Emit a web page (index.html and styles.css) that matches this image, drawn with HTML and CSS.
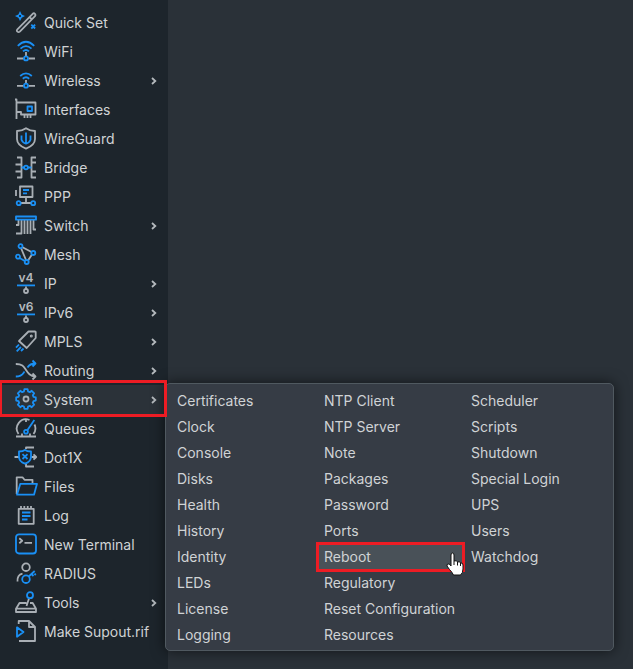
FILE: index.html
```html
<!DOCTYPE html>
<html lang="en">
<head>
<meta charset="utf-8">
<title>Router menu</title>
<link rel="stylesheet" href="styles.css">
</head>
<body>
<div class="app">
<nav class="sidebar" aria-label="Main">
<ul class="menu">
<li><a class="item" href="#"><svg class="icon" viewBox="0 0 24 25"><path d="M3.4 19.4 18.7 3.8q1.2-1 2.3 0t0 2.4L5.8 21.6q-1.2 1-2.4 0t0-2.2zM15.5 7l2.4 2.4"/><path class="b fill" d="M6 1 7.700 4.400 11 6 7.700 7.700 6 11 4.400 7.700 1 6 4.400 4.400z"/><path class="k" d="M6 5v2"/><path class="b" d="M17.300 14.700l3.800 3.800M21.100 14.700l-3.800 3.800"/></svg>Quick Set</a></li>
<li><a class="item" href="#"><svg class="icon" viewBox="0 0 24 25"><path class="b" d="M3.8 6.8Q12-1.2 20.2 6.8M6.5 9.7Q12 4.5 17.5 9.7M9 12.4Q12 9.5 15 12.4"/><path d="M12 13v4M3 19.5h6.5M14.5 19.5H21"/><circle class="b" cx="12" cy="19.4" r="2"/></svg>WiFi</a></li>
<li><button class="item" type="button"><svg class="icon" viewBox="0 0 24 25"><path class="b" d="M6.2 8Q12 2.7 17.8 8M8.8 10.7Q12 7.9 15.2 10.7"/><path d="M12 12v3.5M3 17.8h6.5M14.5 17.8H21"/><circle class="b" cx="12" cy="17.7" r="2"/></svg>Wireless<svg class="arrow" viewBox="0 0 6 10"><path d="M1 2l3.3 3L1 8"/></svg></button></li>
<li><a class="item" href="#"><svg class="icon" viewBox="0 0 24 25"><path d="M1 2.500h1.500v19.500M2.500 5.500h19v12H7V15H2.500M10.500 18v3M13.500 18v3M16.500 18v3"/><path class="b" d="M13.500 9.500h4.500v4.500h-4.500z"/></svg>Interfaces</a></li>
<li><a class="item" href="#"><svg class="icon" viewBox="0 0 24 25"><path d="M12 2.2Q16 5 21 5v8q0 6-9 9.7Q3 19 3 13V5q5 0 9-2.8z"/><path class="b" d="M12 6.5v11.3M7.5 9.5v4.2q1 3 4.5 4 3.500-1 4.500-4V9.500"/></svg>WireGuard</a></li>
<li><a class="item" href="#"><svg class="icon" viewBox="0 0 24 25"><path d="M3 2.500h4.500v20H3M1.500 9.500h6M1.500 16.500h6M22 2.500h-4.500v20H22M17.500 7.500H22M17.500 16.500H22"/><path class="b" d="M7.500 12.500H10M14 12.500h3.500"/><circle class="b" cx="12" cy="12.500" r="1.900"/></svg>Bridge</a></li>
<li><a class="item" href="#"><svg class="icon" viewBox="0 0 24 25"><path d="M6 2.500h12.500v10.500H6zM2 6v6M12 13v6M7 19h10"/><path class="b" d="M9 6h6M9 9.300h4"/><circle class="b" cx="4.700" cy="19.200" r="2"/><circle class="b" cx="19.200" cy="19.200" r="2"/></svg>PPP</a></li>
<li><button class="item" type="button"><svg class="icon" viewBox="0 0 24 25"><path d="M4.500 7v5H2M7.500 7v13.500H2M10.500 7v14M13.500 7v14M16.500 7v14M19.500 7v9.500H22"/><path class="b" d="M2 3.500h20v3.200H2z"/></svg>Switch<svg class="arrow" viewBox="0 0 6 10"><path d="M1 2l3.300 3L1 8"/></svg></button></li>
<li><a class="item" href="#"><svg class="icon" viewBox="0 0 24 25"><path d="M8 5l9.500 5M7 6l5 12M18 12.500l-4 6"/><path class="b" d="M5.600 16l5.200 3"/><g class="b"><circle cx="6.500" cy="4.200" r="2"/><circle cx="19.300" cy="11" r="2"/><circle cx="4" cy="14.700" r="2"/><circle cx="12.700" cy="20" r="2"/></g></svg>Mesh</a></li>
<li><button class="item" type="button"><svg class="icon" viewBox="0 0 24 25"><text x="12" y="11" text-anchor="middle">v4</text><path class="b" d="M3 14.400h18"/><path d="M12 15.500V18"/><circle cx="12" cy="20" r="2"/></svg>IP<svg class="arrow" viewBox="0 0 6 10"><path d="M1 2l3.300 3L1 8"/></svg></button></li>
<li><button class="item" type="button"><svg class="icon" viewBox="0 0 24 25"><text x="12" y="11" text-anchor="middle">v6</text><path class="b" d="M3 14.400h18"/><path d="M12 15.500V18"/><circle cx="12" cy="20" r="2"/></svg>IPv6<svg class="arrow" viewBox="0 0 6 10"><path d="M1 2l3.300 3L1 8"/></svg></button></li>
<li><button class="item" type="button"><svg class="icon" viewBox="0 0 24 25"><path d="M14.500 2.500 21 2.300 21.700 3v6L12.700 19 5 12z"/><circle cx="17.300" cy="7" r=".6"/><path class="b" d="M5 15.500 2 18.700M7 18l-4.300 4.300M9.500 19.500 7 22"/></svg>MPLS<svg class="arrow" viewBox="0 0 6 10"><path d="M1 2l3.300 3L1 8"/></svg></button></li>
<li><button class="item" type="button"><svg class="icon" viewBox="0 0 24 25"><path d="M1.800 6C9 6 10 9 12 12s4 6 9.500 6.500M18.500 15.500l3 3-3 3"/><path class="b" d="M1.800 18.500C8 18.500 9 15.500 10.500 13.500M13.500 9.500C15 7 17 5.500 21.500 5.500M18.500 2.500l3 3-3 3"/></svg>Routing<svg class="arrow" viewBox="0 0 6 10"><path d="M1 2l3.300 3L1 8"/></svg></button></li>
<li class="current"><button class="item" type="button" aria-expanded="true"><svg class="icon" viewBox="0 0 24 25"><path class="b" d="M10.400 2.200h3.200L14.100 4.500 15.800 5.200 17.700 3.800 20.200 6.300 18.800 8.200 19.500 9.900 21.800 10.400V13.600L19.500 14.100 18.800 15.800 20.200 17.700 17.700 20.200 15.800 18.800 14.100 19.500 13.600 21.800H10.400L9.900 19.500 8.200 18.800 6.300 20.200 3.800 17.700 5.200 15.800 4.500 14.100 2.200 13.600V10.400L4.500 9.900 5.200 8.200 3.800 6.300 6.300 3.800 8.200 5.200 9.900 4.500z"/><circle cx="12" cy="12" r="2.500"/></svg>System<svg class="arrow" viewBox="0 0 6 10"><path d="M1 2l3.300 3L1 8"/></svg></button>
<ul class="flyout">
<li><a href="#">Certificates</a></li><li><a href="#">Clock</a></li><li><a href="#">Console</a></li><li><a href="#">Disks</a></li><li><a href="#">Health</a></li><li><a href="#">History</a></li><li><a href="#">Identity</a></li><li><a href="#">LEDs</a></li><li><a href="#">License</a></li><li><a href="#">Logging</a></li>
<li><a href="#">NTP Client</a></li><li><a href="#">NTP Server</a></li><li><a href="#">Note</a></li><li><a href="#">Packages</a></li><li><a href="#">Password</a></li><li><a href="#">Ports</a></li>
<li class="hovered"><a href="#">Reboot</a><svg class="pointer" viewBox="0 0 18 24"><path d="M5 14V3q0-2 1.500-2T8 3v6q3-1 3.500 1Q14 9 14.500 11q2.500-.5 2.500 2v4q0 4-2.500 6H7.500Q6 20 3.500 17.500L1 14q-.5-2 1.500-2Q4 12 5 14z"/><path d="M8 9v4M11.500 10v3.500M14.500 11v3"/></svg></li>
<li><a href="#">Regulatory</a></li><li><a href="#">Reset Configuration</a></li><li><a href="#">Resources</a></li>
<li><a href="#">Scheduler</a></li><li><a href="#">Scripts</a></li><li><a href="#">Shutdown</a></li><li><a href="#">Special Login</a></li><li><a href="#">UPS</a></li><li><a href="#">Users</a></li><li><a href="#">Watchdog</a></li>
</ul></li>
<li><a class="item" href="#"><svg class="icon" viewBox="0 0 24 25"><path d="M2 20.500h20M4.500 18A9.300 9.300 0 0 1 15.500 4M20.500 8.500A9.300 9.300 0 0 1 19.500 18M8 17.500v3M16 17.500v3M12 3.500v2.500"/><path class="b" d="M20.300 4 13.500 14"/><circle class="b" cx="12" cy="15.800" r="1.900"/></svg>Queues</a></li>
<li><a class="item" href="#"><svg class="icon" viewBox="0 0 24 25"><path d="M.5 12H5M12 4V2.500h8M12 19v2.500h8M17.500 12H22M19.500 9.300l2.700 2.700-2.700 2.700"/><path class="b" d="M5 6.500q4 0 6-1.500 2 1.500 6 1.500V12q0 4.500-6 6.700Q5 16.500 5 12z"/><path class="b" d="M8.500 9.200l5 4.800M13.500 9.200l-5 4.800"/></svg>Dot1X</a></li>
<li><a class="item" href="#"><svg class="icon" viewBox="0 0 24 25"><path d="M2.700 20V3.300H8.500L10.500 5.800h8V9"/><path class="b" d="M3 20.700 6.300 9.800H23l-3 10.900z"/></svg>Files</a></li>
<li><a class="item" href="#"><svg class="icon" viewBox="0 0 24 25"><path d="M4.700 5.800h15v15h-15zM7 3v3M10.300 3v3M13.700 3v3M17 3v3"/><path class="b" d="M8 9.500h8.500M8 13h8.500M8 16.500h5.500"/></svg>Log</a></li>
<li><a class="item" href="#"><svg class="icon" viewBox="0 0 24 25"><rect class="b" x="2" y="2.300" width="20" height="19.200" rx="3"/><path d="M5.300 6.300l2.900 2.500-2.900 2.500M10.500 10.800H18"/></svg>New Terminal</a></li>
<li><a class="item" href="#"><svg class="icon" viewBox="0 0 24 25"><circle cx="12" cy="6.200" r="3.800"/><path d="M3.500 20.500Q3 14 8.500 12.700"/><circle class="b" cx="12" cy="18.200" r="3.800"/><path class="b" d="M14.700 15.500l6-5.500M17.500 13l2 2M20.500 14l1.300-1.300"/></svg>RADIUS</a></li>
<li><button class="item" type="button"><svg class="icon" viewBox="0 0 24 25"><path d="M12.500 13H5.500L2 18.700V22h20v-3.300L18.700 13H16M2 18.700h20M15 8.500 12.500 16"/><circle class="b" cx="16" cy="5.200" r="3"/></svg>Tools<svg class="arrow" viewBox="0 0 6 10"><path d="M1 2l3.300 3L1 8"/></svg></button></li>
<li><a class="item" href="#"><svg class="icon" viewBox="0 0 24 25"><path d="M4.700 5V2H15l6 6v14H5M15 2v6h6"/><path class="b" d="M3 8.300 9.500 13 3 17.700z"/></svg>Make Supout.rif</a></li>
</ul>
</nav>
<main class="workspace"></main>
</div>
</body>
</html>
```
FILE: styles.css
```css
* { box-sizing: border-box; }
body { margin: 0; background: #2a3138; color: #d0d3d5; font: 14px/20px Inter, "Liberation Sans", sans-serif; }
ul { list-style: none; margin: 0; padding: 0; }
a, button { color: inherit; font: inherit; text-decoration: none; }
.app { display: flex; min-height: 100vh; }
.workspace { flex: 1; }
.sidebar { width: 168px; flex: none; padding-top: 8px; background: #1d252c; }
.menu > li { position: relative; }
.item { display: flex; align-items: center; gap: 6px; width: 100%; height: 29px; padding: 0 11px 0 14px; border: 0; background: none; text-align: left; white-space: nowrap; }
.current > .item { background: #2b3239; }
.icon { width: 24px; height: 25px; flex: none; fill: none; stroke: #a9afb5; stroke-width: 1.8; stroke-linejoin: round; }
.icon .b { stroke: #1a90f5; }
.icon .fill { fill: #1a90f5; stroke-width: 0; }
.icon .k { stroke: #1d252c; }
.icon text { font: 600 12px Inter, sans-serif; fill: #b4b9be; stroke: none; }
.arrow { width: 6px; height: 10px; margin-left: auto; fill: none; stroke: #b4b9bd; stroke-width: 1.8; }
.current::after, .hovered::after { content: ""; position: absolute; border: 3px solid #ed1c24; pointer-events: none; z-index: 2; }
.current::after { inset: -5px 1px -3px -1px; }
.hovered::after { inset: -2px -2px -2px 0; }
.flyout { position: absolute; left: 165px; top: -2px; z-index: 1; display: grid; grid-auto-flow: column; grid-template: repeat(10, 26px) / repeat(3, 147px); padding: 4px 3px 2px; background: #363c45; border: 1px solid #505960; border-radius: 5px; box-shadow: 0 0 14px rgba(0, 0, 0, .6); }
.flyout li { position: relative; }
.flyout a { display: flex; align-items: center; height: 100%; padding: 0 8px; white-space: nowrap; }
.hovered a { background: #495158; }
.pointer { position: absolute; right: -1px; top: 8px; width: 18px; height: 24px; z-index: 3; fill: #fff; stroke: #111; stroke-width: 1; }
```
